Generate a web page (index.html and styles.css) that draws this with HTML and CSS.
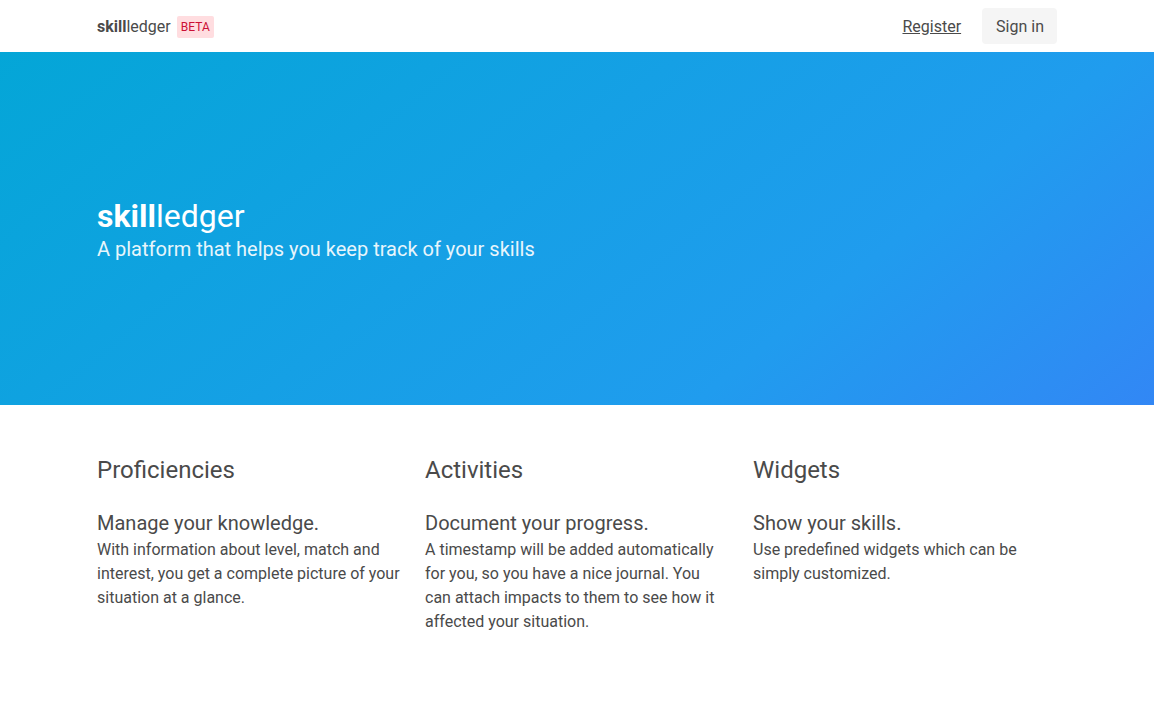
FILE: index.html
```html
<!DOCTYPE html>
<html lang="en">
<head>
  <meta charset="UTF-8">
  <meta name="viewport" content="width=device-width, initial-scale=1.0">
  <title>skillledger</title>
  <link rel="stylesheet" href="styles.css">
</head>
<body>
  <nav class="navbar">
    <div class="container navbar-inner">
      <div class="brand">
        <a href="#" class="logo"><strong>skill</strong>ledger</a>
        <span class="tag">BETA</span>
      </div>
      <div class="navbar-end">
        <a href="#" class="nav-link">Register</a>
        <a href="#" class="button">Sign in</a>
      </div>
    </div>
  </nav>

  <section class="hero">
    <div class="container">
      <h1 class="hero-title"><strong>skill</strong>ledger</h1>
      <h2 class="hero-subtitle">A platform that helps you keep track of your skills</h2>
    </div>
  </section>

  <section class="features">
    <div class="container columns">
      <div class="column">
        <h3 class="feature-title">Proficiencies</h3>
        <h4 class="feature-subtitle">Manage your knowledge.</h4>
        <p>With information about level, match and interest, you get a complete picture of your situation at a glance.</p>
      </div>
      <div class="column">
        <h3 class="feature-title">Activities</h3>
        <h4 class="feature-subtitle">Document your progress.</h4>
        <p>A timestamp will be added automatically for you, so you have a nice journal. You can attach impacts to them to see how it affected your situation.</p>
      </div>
      <div class="column">
        <h3 class="feature-title">Widgets</h3>
        <h4 class="feature-subtitle">Show your skills.</h4>
        <p>Use predefined widgets which can be simply customized.</p>
      </div>
    </div>
  </section>
</body>
</html>
```

FILE: styles.css
```css
* { margin: 0; padding: 0; box-sizing: border-box; }
body { font-family: Roboto, "Liberation Sans", sans-serif; font-size: 16px; line-height: 1.5; color: #4a4a4a; background: white; }
a { color: inherit; text-decoration: none; }
.container { max-width: 960px; margin: 0 auto; }

.navbar { height: 52px; padding-top: 2px; background: white; }
.navbar-inner { height: 100%; display: flex; align-items: center; justify-content: space-between; }
.brand { display: flex; align-items: center; gap: 6px; }
.logo { font-size: 16px; }
.tag {
  background: #ffdde0;
  color: #cc0f35;
  font-size: 12px;
  height: 22px;
  line-height: 22px;
  padding: 0 4px;
  border-radius: 2px;
  margin-top: -1px;
}
.navbar-end { display: flex; align-items: center; gap: 21px; }
.nav-link { text-decoration: underline; }
.button {
  background: #f5f5f5;
  height: 36px;
  line-height: 38px;
  padding: 0 13px 0 14px;
  border-radius: 4px;
  margin-top: -2px;
}

.hero {
  background: linear-gradient(141deg, #04a6d7 0%, #209cee 71%, #3287f5 100%);
  color: white;
  height: 353px;
  padding-top: 3px;
  display: flex;
  align-items: center;
}
.hero .container { width: 960px; }
.hero-title { font-size: 32px; font-weight: 400; line-height: 1.125; }
.hero-title strong { font-weight: 700; }
.hero-subtitle { font-size: 20px; font-weight: 400; line-height: 1.25; margin-top: 3px; opacity: 0.9; }

.features { padding: 52px 0 48px; }
.columns { display: grid; grid-template-columns: repeat(3, 1fr); gap: 24px; }
.feature-title { font-size: 24px; font-weight: 400; line-height: 1.125; margin-bottom: 27px; }
.feature-subtitle { font-size: 20px; font-weight: 400; line-height: 1.25; margin-bottom: 2px; }
.column p { font-size: 16px; line-height: 24px; }
```
